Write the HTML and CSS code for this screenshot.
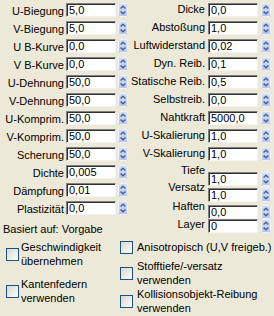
FILE: index.html
```html
<!DOCTYPE html>
<html lang="de">
<head>
    <meta charset="UTF-8">
    <title>Stoff-Eigenschaften</title>
    <link rel="stylesheet" href="styles.css">
</head>
<body>
    <!-- shared spinner drawing -->
    <svg class="defs" width="0" height="0">
        <defs>
            <linearGradient id="spinFill" x1="0" y1="0" x2="0" y2="1">
                <stop offset="0" stop-color="#d6e0f8"/>
                <stop offset="1" stop-color="#b5c6ee"/>
            </linearGradient>
            <symbol id="spin" viewBox="0 0 10 14">
                <rect x="0" y="0" width="10" height="14" rx="1.5" fill="url(#spinFill)"/>
                <rect x="0.5" y="0.5" width="9" height="13" rx="1" fill="none" stroke="#eef2fc"/>
                <path d="M2.6 5.6 L5 3.2 L7.4 5.6" fill="none" stroke="#4b5f8e" stroke-width="1.4"/>
                <path d="M2.6 8.4 L5 10.8 L7.4 8.4" fill="none" stroke="#4b5f8e" stroke-width="1.4"/>
            </symbol>
        </defs>
    </svg>

    <div class="props">
        <div class="col col-left">
            <div class="row"><label>U-Biegung</label><span class="ctl"><input value="5,0"><svg class="spin"><use href="#spin"/></svg></span></div>
            <div class="row"><label>V-Biegung</label><span class="ctl"><input value="5,0"><svg class="spin"><use href="#spin"/></svg></span></div>
            <div class="row"><label>U B-Kurve</label><span class="ctl"><input value="0,0"><svg class="spin"><use href="#spin"/></svg></span></div>
            <div class="row"><label>V B-Kurve</label><span class="ctl"><input value="0,0"><svg class="spin"><use href="#spin"/></svg></span></div>
            <div class="row"><label>U-Dehnung</label><span class="ctl"><input value="50,0"><svg class="spin"><use href="#spin"/></svg></span></div>
            <div class="row"><label>V-Dehnung</label><span class="ctl"><input value="50,0"><svg class="spin"><use href="#spin"/></svg></span></div>
            <div class="row"><label>U-Komprim.</label><span class="ctl"><input value="50,0"><svg class="spin"><use href="#spin"/></svg></span></div>
            <div class="row"><label>V-Komprim.</label><span class="ctl"><input value="50,0"><svg class="spin"><use href="#spin"/></svg></span></div>
            <div class="row"><label>Scherung</label><span class="ctl"><input value="50,0"><svg class="spin"><use href="#spin"/></svg></span></div>
            <div class="row"><label>Dichte</label><span class="ctl"><input value="0,005"><svg class="spin"><use href="#spin"/></svg></span></div>
            <div class="row"><label>Dämpfung</label><span class="ctl"><input value="0,01"><svg class="spin"><use href="#spin"/></svg></span></div>
            <div class="row"><label>Plastizität</label><span class="ctl"><input value="0,0"><svg class="spin"><use href="#spin"/></svg></span></div>
            <div class="basis">Basiert auf: Vorgabe</div>
        </div>

        <div class="col col-right">
            <div class="row"><label>Dicke</label><span class="ctl"><input value="0,0"><svg class="spin"><use href="#spin"/></svg></span></div>
            <div class="row"><label>Abstoßung</label><span class="ctl"><input value="1,0"><svg class="spin"><use href="#spin"/></svg></span></div>
            <div class="row"><label>Luftwiderstand</label><span class="ctl"><input value="0,02"><svg class="spin"><use href="#spin"/></svg></span></div>
            <div class="row"><label>Dyn. Reib.</label><span class="ctl"><input value="0,1"><svg class="spin"><use href="#spin"/></svg></span></div>
            <div class="row"><label>Statische Reib.</label><span class="ctl"><input value="0,5"><svg class="spin"><use href="#spin"/></svg></span></div>
            <div class="row"><label>Selbstreib.</label><span class="ctl"><input value="0,0"><svg class="spin"><use href="#spin"/></svg></span></div>
            <div class="row"><label>Nahtkraft</label><span class="ctl"><input value="5000,0"><svg class="spin"><use href="#spin"/></svg></span></div>
            <div class="row"><label>U-Skalierung</label><span class="ctl"><input value="1,0"><svg class="spin"><use href="#spin"/></svg></span></div>
            <div class="row"><label>V-Skalierung</label><span class="ctl"><input value="1,0"><svg class="spin"><use href="#spin"/></svg></span></div>
            <div class="row r-tiefe"><label>Tiefe</label><span class="ctl"><input value="1,0"><svg class="spin"><use href="#spin"/></svg></span></div>
            <div class="row r-versatz"><label>Versatz</label><span class="ctl"><input value="1,0"><svg class="spin"><use href="#spin"/></svg></span></div>
            <div class="row r-haften"><label>Haften</label><span class="ctl"><input value="0,0"><svg class="spin"><use href="#spin"/></svg></span></div>
            <div class="row r-layer"><label>Layer</label><span class="ctl"><input value="0"><svg class="spin"><use href="#spin"/></svg></span></div>
        </div>
    </div>

    <div class="opts">
        <div class="opt-col opt-left">
            <label class="check"><span class="box"></span><span class="txt">Geschwindigkeit übernehmen</span></label>
            <label class="check gap-9"><span class="box"></span><span class="txt">Kantenfedern verwenden</span></label>
        </div>
        <div class="opt-col opt-right">
            <label class="check"><span class="box"></span><span class="txt">Anisotropisch (U,V freigeb.)</span></label>
            <label class="check gap-5"><span class="box"></span><span class="txt">Stofftiefe/-versatz verwenden</span></label>
            <label class="check"><span class="box"></span><span class="txt">Kollisionsobjekt-Reibung verwenden</span></label>
        </div>
    </div>
</body>
</html>
```

FILE: styles.css
```css
/* 3ds Max style cloth property rollout */
body {
    margin: 0;
    width: 274px;
    height: 316px;
    overflow: hidden;
    background-color: #ece9d8;
    font-family: "Liberation Sans", Arial, sans-serif;
    font-size: 11px;
    color: #000;
}

.defs {
    display: block;
    width: 0;
    height: 0;
    overflow: hidden;
}

.props {
    display: flex;
    height: 236px;
}

.col {
    display: flex;
    flex-direction: column;
    padding-top: 3px;
}

.col-left {
    width: 128px;
}

.col-right {
    width: 143px;
}

.row {
    display: flex;
    align-items: flex-start;
    height: 18px;
    flex: none;
}

.row label {
    flex: 1;
    text-align: right;
    line-height: 14px;
    white-space: nowrap;
}

.col-left .row label {
    margin: 1px 2px 0 0;
}

.col-right .row label {
    margin: -1px 3px 0 0;
}

.ctl {
    display: flex;
}

.col-left .ctl {
    gap: 2px;
}

.col-right .ctl {
    gap: 3px;
}

.ctl input {
    box-sizing: border-box;
    width: 50px;
    height: 14px;
    margin: 0;
    padding: 0 2px;
    border: 1px solid;
    border-color: #808080 #f4f3ee #f4f3ee #808080;
    box-shadow: inset 1px 1px 0 #303030;
    background-color: #fff;
    font-family: inherit;
    font-size: 11px;
    color: #000;
    outline: none;
}

.spin {
    width: 10px;
    height: 14px;
    display: block;
}

/* the lower right rows sit on their own uneven grid */
.col-right .r-tiefe {
    height: 15px;
}

.col-right .r-tiefe label {
    margin-top: -2px;
}

.r-tiefe .ctl {
    margin-top: 7px;
}

.col-right .r-versatz {
    height: 19px;
}

.col-right .r-versatz label,
.col-right .r-haften label,
.col-right .r-layer label {
    margin-top: 0;
}

.r-versatz .ctl {
    margin-top: 8px;
}

.r-haften .ctl {
    margin-top: 6px;
}

.r-layer .ctl {
    margin-top: 2px;
}

.basis {
    margin-top: 3px;
    padding-left: 3px;
    line-height: 14px;
    white-space: nowrap;
}

.opts {
    display: flex;
}

.opt-col {
    display: flex;
    flex-direction: column;
    padding: 4px 0 0 6px;
}

.opt-left {
    width: 108px;
}

.opt-right {
    flex: 1;
}

.check {
    display: flex;
    align-items: center;
    line-height: 14px;
}

.opt-left .check .box {
    margin-right: 2px;
}

.opt-right .check .box {
    margin-right: 4px;
}

.check .txt {
    flex: 1;
}

.gap-9 {
    margin-top: 9px;
}

.gap-5 {
    margin-top: 5px;
}

.box {
    flex: none;
    box-sizing: border-box;
    width: 13px;
    height: 13px;
    border: 1px solid #1c5180;
    background: linear-gradient(135deg, #d8d8d2 0%, #f2f2ee 70%, #fdfdfb 100%);
}
```
